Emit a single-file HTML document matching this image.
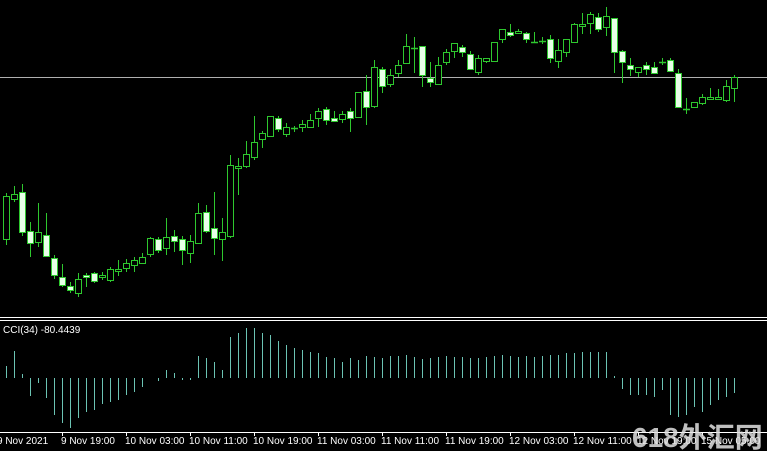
<!DOCTYPE html>
<html><head><meta charset="utf-8"><style>
html,body{margin:0;padding:0;background:#000;width:767px;height:451px;overflow:hidden}
svg{display:block}
</style></head><body>
<svg id="s" width="767" height="451" xmlns="http://www.w3.org/2000/svg" font-family="'Liberation Sans',sans-serif">
<rect width="767" height="451" fill="#000"/>
<line x1="0" y1="77.5" x2="767" y2="77.5" stroke="#b0b0b0" stroke-width="1"/>
<line x1="0" y1="317.5" x2="767" y2="317.5" stroke="#fff" stroke-width="1"/>
<line x1="0" y1="320.5" x2="767" y2="320.5" stroke="#fff" stroke-width="1"/>
<line x1="0" y1="432.5" x2="767" y2="432.5" stroke="#fff" stroke-width="1"/>
<text x="3" y="333" fill="#fff" font-size="10">CCI(34) -80.4439</text>
<g id="c"></g>
<g fill="#fff" font-size="10">
<text x="-3" y="444">9 Nov 2021</text>
<text x="61" y="444">9 Nov 19:00</text>
<text x="125" y="444">10 Nov 03:00</text>
<text x="189" y="444">10 Nov 11:00</text>
<text x="253" y="444">10 Nov 19:00</text>
<text x="317" y="444">11 Nov 03:00</text>
<text x="381" y="444">11 Nov 11:00</text>
<text x="445" y="444">11 Nov 19:00</text>
<text x="509" y="444">12 Nov 03:00</text>
<text x="573" y="444">12 Nov 11:00</text>
<text x="637" y="444">12 Nov 19:00</text>
<text x="701" y="444">15 Nov 05:00</text>
</g>
<g stroke="#fff" stroke-width="1">
<line x1="62.5" y1="433" x2="62.5" y2="436"/><line x1="126.5" y1="433" x2="126.5" y2="436"/><line x1="190.5" y1="433" x2="190.5" y2="436"/><line x1="254.5" y1="433" x2="254.5" y2="436"/><line x1="318.5" y1="433" x2="318.5" y2="436"/><line x1="382.5" y1="433" x2="382.5" y2="436"/><line x1="446.5" y1="433" x2="446.5" y2="436"/><line x1="510.5" y1="433" x2="510.5" y2="436"/><line x1="574.5" y1="433" x2="574.5" y2="436"/><line x1="638.5" y1="433" x2="638.5" y2="436"/><line x1="702.5" y1="433" x2="702.5" y2="436"/>
</g>
<text x="632" y="447" fill="#e0e0e0" fill-opacity="0.85" font-size="28" font-weight="bold" font-family="'Liberation Sans','Noto Sans CJK SC',sans-serif">618外汇网</text>
</svg>
<script>
var C=[[196,239,193,245,1],[194,199,186,202,1],[192,232,184,236,0],[231,243,222,257,0],[232,242,203,247,1],[235,256,213,257,0],[258,275,255,279,0],[277,285,264,287,0],[286,290,282,293,0],[279,293,273,297,1],[275,277,273,287,0],[273,281,272,283,0],[275,277,272,280,1],[269,280,267,282,1],[269,271,260,276,1],[263,268,259,272,1],[260,265,257,272,1],[257,263,253,263,1],[238,254,237,257,1],[239,250,237,253,0],[237,248,218,255,1],[236,241,230,252,0],[239,250,236,265,0],[241,253,235,263,1],[213,243,203,244,1],[212,231,205,233,0],[228,238,192,255,0],[232,239,218,261,1],[165,236,155,238,1],[166,168,158,195,1],[154,166,141,168,1],[142,157,116,160,1],[133,139,131,148,1],[116,136,116,136,1],[118,129,116,132,0],[127,134,123,137,1],[128,129,126,132,1],[124,127,120,132,1],[120,127,114,127,1],[111,118,108,127,1],[109,120,107,125,0],[118,121,111,122,0],[114,119,111,123,1],[111,118,108,132,0],[92,117,92,118,1],[91,107,75,125,0],[67,106,60,108,1],[69,86,67,93,0],[75,84,69,87,1],[65,73,60,77,1],[46,63,34,63,1],[48,49,37,73,1],[46,75,46,87,0],[78,82,62,87,0],[65,84,57,85,1],[52,62,49,65,1],[43,51,43,58,1],[47,52,45,57,0],[54,69,51,70,0],[58,72,55,75,1],[58,61,58,63,1],[42,61,42,61,1],[29,39,29,43,1],[32,35,24,37,0],[31,33,29,33,1],[33,39,32,43,0],[42,43,32,43,0],[41,42,37,44,1],[39,58,35,63,0],[50,61,39,68,1],[39,52,39,57,1],[24,42,23,42,1],[24,26,13,34,1],[14,23,12,34,1],[17,29,13,32,0],[16,27,7,36,1],[18,52,18,73,0],[51,62,50,83,0],[65,69,58,76,0],[67,72,67,77,1],[65,69,62,75,0],[67,73,62,73,0],[62,63,58,65,1],[60,71,58,72,0],[73,107,69,107,0],[109,110,98,114,1],[102,107,102,107,1],[97,103,94,105,1],[97,99,88,99,1],[97,99,89,99,1],[86,100,80,102,1],[77,88,75,102,1]];
var K=[366,351,374,396,383,398,415,423,428,418,412,410,404,402,400,395,392,387,377,381,370,373,380,380,356,358,362,370,337,333,328,328,333,335,341,345,348,350,352,353,357,358,362,358,360,356,357,358,356,356,355,357,359,358,357,356,357,357,358,358,357,356,355,356,357,356,357,356,355,355,353,353,352,352,352,352,376,389,395,395,395,397,390,415,417,415,407,412,405,400,397,393];
var Z=378,h='',g=document.getElementById('c');
K.forEach(function(v,i){var x=6.5+8*i;if(Math.abs(v-Z)<2)return;h+='<line x1="'+x+'" y1="'+Z+'" x2="'+x+'" y2="'+v+'" stroke="#6cc4b4" stroke-width="1"/>';});
C.forEach(function(c,i){var x=6+8*i;var t=c[0],b=c[1];
h+='<line x1="'+(x+.5)+'" y1="'+c[2]+'" x2="'+(x+.5)+'" y2="'+c[3]+'" stroke="#2ec82e" stroke-width="1"/>';
if(b-t<2){h+='<line x1="'+(x-3)+'" y1="'+(t+.5)+'" x2="'+(x+4)+'" y2="'+(t+.5)+'" stroke="#2ec82e" stroke-width="1.5"/>';}
else h+='<rect x="'+(x-2.5)+'" y="'+(t+.5)+'" width="6" height="'+(b-t)+'" fill="'+(c[4]?'#000':'#e8ffe8')+'" stroke="#2ec82e" stroke-width="1"/>';});
g.innerHTML=h;
</script>
</body></html>
